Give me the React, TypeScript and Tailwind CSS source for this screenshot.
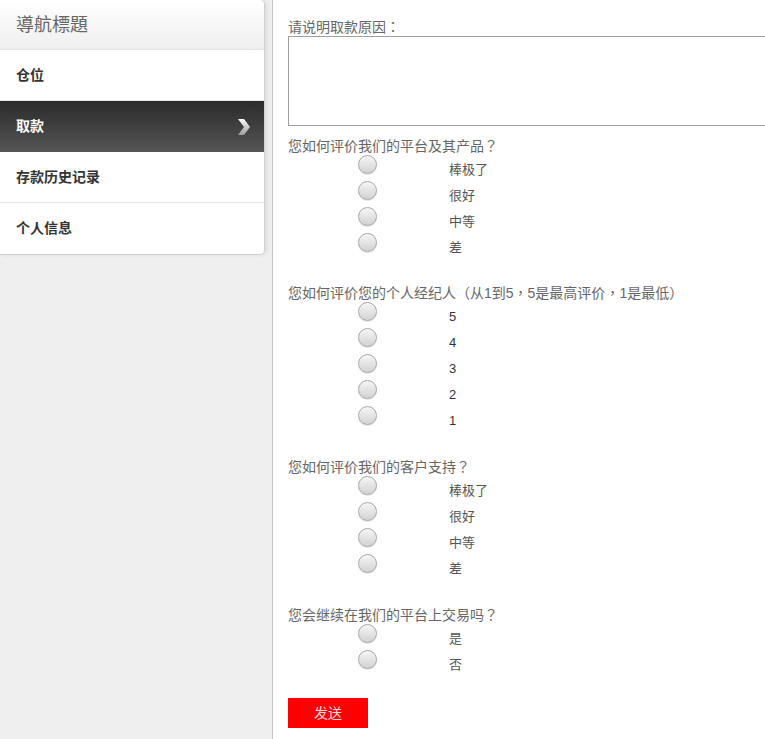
import React from "react";

const font = { fontFamily: '"Liberation Sans", "Noto Sans CJK SC", sans-serif' };
const tc = { fontFamily: '"Noto Sans CJK TC", sans-serif' };

function T({ text }: { text: string }) {
  const parts = text.split(/([？：，（）])/);
  return (
    <>
      {parts.map((p, i) =>
        /^[？：，（）]$/.test(p) ? (
          <span key={i} style={tc}>
            {p}
          </span>
        ) : (
          <React.Fragment key={i}>{p}</React.Fragment>
        )
      )}
    </>
  );
}

function Radio() {
  return (
    <div className="w-[19px] h-[19px] rounded-full border border-[#a8a8a8] bg-gradient-to-b from-[#f6f6f6] to-[#d2d2d2] shadow-[0_1px_1px_rgba(0,0,0,0.12)] shrink-0" />
  );
}

function Question({
  title,
  options,
  numeric,
  gap,
}: {
  title: string;
  options: string[];
  numeric?: boolean;
  gap: string;
}) {
  return (
    <div className={gap}>
      <div className="h-[20px] leading-[20px] text-[14px] text-[#666] whitespace-nowrap">
        <T text={title} />
      </div>
      <div className="flex flex-col">
        {options.map((o) => (
          <div key={o} className="flex h-[26px]">
            <div className="ml-[70px]">
              <Radio />
            </div>
            <div
              className={`ml-[72px] pt-[6px] leading-[18px] text-[13px] ${numeric ? "text-[#333]" : "text-[#555]"}`}
            >
              {o}
            </div>
          </div>
        ))}
      </div>
    </div>
  );
}

function Chevron() {
  return (
    <svg width="14" height="18" viewBox="0 0 14 18">
      <defs>
        <linearGradient id="chev" x1="0" y1="0" x2="0" y2="1">
          <stop offset="0" stopColor="#ffffff" />
          <stop offset="1" stopColor="#9a9a9a" />
        </linearGradient>
      </defs>
      <polygon points="1,1 7,1 13,9 7,17 1,17 7,9" fill="url(#chev)" />
    </svg>
  );
}

const navItems = ["仓位", "取款", "存款历史记录", "个人信息"];

export default function App() {
  return (
    <div className="w-[765px] h-[739px] overflow-hidden flex bg-white" style={font}>
      <div className="w-[273px] shrink-0 bg-[#efefef] border-r border-[#c4c4c4]">
        <div className="w-[265px] bg-white border border-l-0 border-t-0 border-[#cfcfcf] rounded-r-[5px] shadow-[2px_0_4px_rgba(0,0,0,0.08)] overflow-hidden">
          <div className="h-[50px] flex items-center pl-4 pt-[1px] bg-gradient-to-b from-[#ffffff] to-[#efefef] border-b border-[#e2e2e2] text-[18px] text-[#666]">
            導航標題
          </div>
          {navItems.map((n, i) => {
            const active = i === 1;
            const last = i === navItems.length - 1;
            return active ? (
              <div
                key={n}
                className="h-[51px] flex items-center justify-between pl-4 pr-[13px] bg-gradient-to-b from-[#2b2b2b] to-[#565656] text-white text-[14px] font-bold"
              >
                <span>{n}</span>
                <Chevron />
              </div>
            ) : (
              <div
                key={n}
                className={`h-[51px] flex items-center pl-4 text-[14px] font-bold text-[#333] ${last ? "h-[50px]" : "border-b border-[#e6e6e6]"}`}
              >
                {n}
              </div>
            );
          })}
        </div>
      </div>
      <div className="flex-1 pl-[15px] pt-[16px]">
        <div className="h-[20px] leading-[20px] text-[14px] text-[#666]">
          <T text="请说明取款原因：" />
        </div>
        <div className="w-[520px] h-[90px] border border-[#a0a0a0] bg-white" />
        <Question gap="mt-[9px]" title="您如何评价我们的平台及其产品？" options={["棒极了", "很好", "中等", "差"]} />
        <Question
          gap="mt-[23px]"
          title="您如何评价您的个人经纪人（从1到5，5是最高评价，1是最低）"
          options={["5", "4", "3", "2", "1"]}
          numeric
        />
        <Question gap="mt-[24px]" title="您如何评价我们的客户支持？" options={["棒极了", "很好", "中等", "差"]} />
        <Question gap="mt-[24px]" title="您会继续在我们的平台上交易吗？" options={["是", "否"]} />
        <div className="mt-[22px] w-[80px] h-[30px] bg-[#ff0000] flex items-center justify-center text-[14px] text-[#ffdcdc]">
          发送
        </div>
      </div>
    </div>
  );
}
